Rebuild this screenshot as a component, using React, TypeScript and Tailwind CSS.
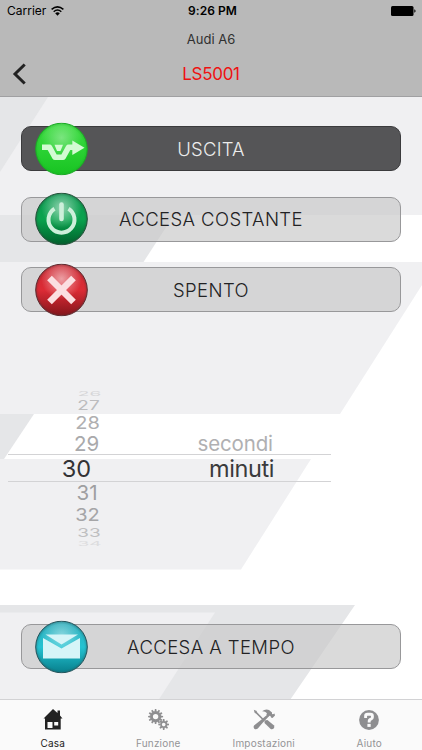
import type { ReactNode } from "react";

function Backdrop() {
  return (
    <svg className="absolute inset-0" width="422" height="750" viewBox="0 0 422 750" aria-hidden="true">
      <rect width="422" height="750" fill="#ffffff" />
      <rect y="97" width="422" height="118" fill="#f0f0f2" />
      <path d="M0 97H48L0 172Z" fill="#e5e6e8" />
      <path d="M0 215H174L143.500 262H0Z" fill="#e5e6e8" />
      <path d="M0 262H422V285L340 414H0Z" fill="#f0f0f2" />
      <path d="M0 414H34L4 459H0Z" fill="#e5e6e8" />
      <path d="M0 459H311L241 569.500H0Z" fill="#f0f0f2" />
      <path d="M0 605H355L290 700H0Z" fill="#e5e6e8" />
      <path d="M0 612.500H215L158.500 700H0Z" fill="#f0f0f2" />
    </svg>
  );
}

type OrbProps = {
  id: string;
  top: string;
  mid: string;
  low: string;
  rim: string;
  shine: number;
  children: ReactNode;
};

function Orb({ id, top, mid, low, rim, shine, children }: OrbProps) {
  return (
    <svg className="absolute top-1/2 left-[13px] -translate-y-1/2" width="53" height="53" viewBox="0 0 53 53" aria-hidden="true">
      <defs>
        <linearGradient id={id} x1="0" y1="0" x2="0" y2="1">
          <stop offset="0" stopColor={top} />
          <stop offset="0.500" stopColor={mid} />
          <stop offset="1" stopColor={low} />
        </linearGradient>
        <radialGradient id={id + "-shine"} cx="0.500" cy="0.280" r="0.400">
          <stop offset="0" stopColor="#fff" stopOpacity={shine} />
          <stop offset="1" stopColor="#fff" stopOpacity="0" />
        </radialGradient>
        <radialGradient id={id + "-edge"}>
          <stop offset="0.880" stopColor={rim} stopOpacity="0" />
          <stop offset="1" stopColor={rim} stopOpacity="0.350" />
        </radialGradient>
      </defs>
      <circle cx="26.500" cy="26.500" r="25.800" fill={`url(#${id})`} stroke={rim} strokeWidth="1" />
      <circle cx="26.500" cy="26.500" r="25.300" fill={`url(#${id}-shine)`} />
      <circle cx="26.500" cy="26.500" r="25.800" fill={`url(#${id}-edge)`} />
      {children}
    </svg>
  );
}

function ActionButton({ label, labelClass, active, orb }: { label: string; labelClass: string; active?: boolean; orb: ReactNode }) {
  return (
    <button
      className={
        "relative flex h-[45px] w-full items-center justify-center rounded-[10px] border pt-[2px] text-[18.5px] font-light " +
        (active ? "border-[#3b3b3d] bg-[#555557] text-[#ececec]" : "border-[#98989a] bg-[#c8c8c8]/67 text-[#222224]")
      }
    >
      {orb}
      <span className={"whitespace-nowrap " + labelClass}>{label}</span>
    </button>
  );
}

const minutes = [
  { n: 26, row: "h-2", text: "text-[19px] scale-y-[0.36] text-[#d6d6d8] translate-x-[0.500px] -translate-y-px" },
  { n: 27, row: "h-3.5", text: "text-[19px] scale-y-[0.68] text-[#bcbcbe] -translate-x-[0.500px]" },
  { n: 28, row: "h-5", text: "text-[20px] scale-y-[0.86] text-[#afafb1] -translate-x-[1.500px] translate-y-[0.500px]" },
  { n: 29, row: "h-6", text: "text-[20.5px] text-[#a9a9ab] -translate-x-[2.500px]" },
  { n: 30, row: "h-[25px]", text: "text-[23.5px] text-[#333335] -translate-x-[12.500px]" },
  { n: 31, row: "h-6", text: "text-[20.5px] text-[#9f9fa1] -translate-x-[2px]" },
  { n: 32, row: "h-[19px]", text: "text-[20px] scale-y-[0.86] text-[#a5a5a7] -translate-x-[1.500px]" },
  { n: 33, row: "h-4", text: "text-[19px] scale-y-[0.65] text-[#bfbfc1]" },
  { n: 34, row: "h-[7px]", text: "text-[19px] scale-y-[0.34] text-[#dcdcde] translate-x-[0.500px]" },
];

function DurationPicker() {
  return (
    <div className="relative mt-[78px] ml-2 flex h-[157px] w-[323px]">
      <div className="flex w-[162px] flex-col items-center">
        {minutes.map((m) => (
          <div key={m.n} className={"flex shrink-0 items-center justify-center " + m.row}>
            <span className={"block leading-none " + m.text}>{m.n}</span>
          </div>
        ))}
      </div>
      <div className="flex flex-1 flex-col pt-[42px]">
        <div className="flex h-6 items-center pl-[27.5px] text-[20.5px] leading-none tracking-[-0.15px] text-[#b0b0b2]">secondi</div>
        <div className="flex h-[25px] items-center pl-[39px] text-[23.5px] leading-none tracking-[-0.4px] text-[#3a3a3c]">minuti</div>
      </div>
      <div className="pointer-events-none absolute inset-x-0 top-16 h-7 border-y border-[#d3d3d5]" />
    </div>
  );
}

function HouseIcon() {
  return (
    <svg width="20" height="21" viewBox="0 0 20 21" aria-hidden="true">
      <path fill="#222" fillRule="evenodd" d="M10 0L14.500 4V1.500H17V6.500L19.500 9.500H17.700V20.500H2V9.500H0.500ZM4.500 13V19H9.500V13ZM11.200 13V16.500H15.200V13Z" />
    </svg>
  );
}

function Gear({ cx, cy, r, hole, teeth }: { cx: number; cy: number; r: number; hole: number; teeth: number }) {
  return (
    <g transform={`translate(${cx} ${cy})`}>
      <circle r={(r + hole) / 2} fill="none" stroke="#8e8e90" strokeWidth={r - hole} />
      {Array.from({ length: teeth }, (_, i) => (
        <path key={i} d={`M-1.100 ${-r + 0.5}L-0.700 ${-r - 1.900}H0.700L1.100 ${-r + 0.5}Z`} fill="#8e8e90" transform={`rotate(${(360 / teeth) * i})`} />
      ))}
    </g>
  );
}

function GearsIcon() {
  return (
    <svg width="21" height="21" viewBox="0 0 21 21" aria-hidden="true">
      <Gear cx={7.6} cy={7.6} r={5.6} hole={2.7} teeth={12} />
      <Gear cx={15.7} cy={15.5} r={3.5} hole={1.8} teeth={8} />
    </svg>
  );
}

function ToolsIcon() {
  return (
    <svg width="22" height="21" viewBox="0 0 22 21" fill="#8e8e90" aria-hidden="true">
      <path d="M0.800 0.800L3.400 1.800L4.300 3.600L11.400 10.700L10.300 11.800L3.200 4.700L1.600 3.700Z" />
      <path d="M11.600 11.600L14.400 10.900L20.800 16.300Q22 18 20.700 19.500Q19.100 21 17.400 19.800L11.500 13.900Z" />
      <path d="M14.500 5.400L16.200 7.100L9.500 13.900L4.800 19.500Q3 21 1.300 19.700Q-0.100 18 1.300 16.300L7.300 11.400Z" />
      <path d="M9 2.300Q12.500-0.400 16 1L19 3.400L19 5L20 5.300L21.500 4.600L22 6.500L19.500 8.900L18 8.600L17.500 7.100L16.500 6.800L15.700 7.600L13.300 5.500L14 4.300Q12 2 9 2.300Z" />
    </svg>
  );
}

function HelpIcon() {
  return (
    <svg width="20" height="20" viewBox="0 0 20 20" aria-hidden="true">
      <circle cx="10" cy="10" r="9.900" fill="#8e8e90" />
      <path d="M6.600 7.900V6Q6.600 4.300 8.500 4.300H11.500Q13.400 4.300 13.400 6V7.300Q13.400 8.800 12 9.200Q10.200 9.700 10.200 11.200V12.400" fill="none" stroke="#fafafa" strokeWidth="2.900" />
      <rect x="8.400" y="13.900" width="3.300" height="3" fill="#fafafa" />
    </svg>
  );
}

const tabs = [
  { label: "Casa", icon: <HouseIcon />, tone: "text-[#222]" },
  { label: "Funzione", icon: <GearsIcon />, tone: "text-[#949496]" },
  { label: "Impostazioni", icon: <ToolsIcon />, tone: "text-[#949496]" },
  { label: "Aiuto", icon: <HelpIcon />, tone: "text-[#949496]" },
];

export default function App() {
  return (
    <div className="relative h-[750px] w-[422px] overflow-hidden font-['Inter','Liberation_Sans',sans-serif]">
      <Backdrop />
      <div className="relative flex h-full flex-col">
        <header className="flex h-[97px] shrink-0 flex-col border-b border-[#a0a0a2] bg-[#b9b9b9]">
          <div className="grid h-[22px] grid-cols-3 items-center pr-[6px] pl-[7px] text-[12px] text-black">
            <div className="flex items-center gap-[5px]">
              <span>Carrier</span>
              <svg width="13" height="10" viewBox="0 0 13 10" aria-hidden="true">
                <path d="M0.600 3.400Q6.500-1.700 12.400 3.400" fill="none" stroke="#000" strokeWidth="1.500" />
                <path d="M2.700 5.700Q6.500 2.400 10.300 5.700" fill="none" stroke="#000" strokeWidth="1.500" />
                <path d="M4.200 7.200Q6.500 5.300 8.800 7.200L6.500 9.700Z" />
              </svg>
            </div>
            <div className="pl-[2px] text-center font-semibold tracking-[0.05px] whitespace-nowrap">9:26 PM</div>
            <svg className="justify-self-end" width="25" height="10" viewBox="0 0 25 10" aria-hidden="true">
              <rect width="22.500" height="10" rx="1.500" />
              <path d="M23.300 3.300Q24.600 3.800 24.600 5T23.300 6.700Z" />
            </svg>
          </div>
          <div className="flex h-[34px] items-center justify-center pt-[2px] text-[13px] text-[#303030]">Audi A6</div>
          <div className="grid h-9 grid-cols-[60px_1fr_60px] items-center">
            <svg className="ml-3" width="15" height="22" viewBox="0 0 15 22" aria-hidden="true">
              <path d="M12.700 1.500L3 11L12.700 20.500" fill="none" stroke="#222" strokeWidth="3" />
            </svg>
            <h1 className="pt-[2px] text-center text-[17px] tracking-[-0.3px] text-[#ee1111]">LS5001</h1>
          </div>
        </header>

        <main className="flex flex-1 flex-col">
          <div className="flex flex-col gap-[25.5px] px-[21px] pt-[29px]">
            <ActionButton
              active
              label="USCITA"
              labelClass="tracking-[0.2px]"
              orb={
                <Orb id="orb-exit" top="#3fdc43" mid="#2bd334" low="#18c322" rim="#1ba825" shine={0.35}>
                  <path d="M7 24.800H14.500L20 34.800H28L33.500 24.800H40" fill="none" stroke="#d3fbd3" strokeWidth="5.600" strokeLinejoin="round" />
                  <path d="M19.500 22.200H28L25.500 28.500H22Z" fill="#d3fbd3" />
                  <path d="M37.300 18L49.500 25.200L37.300 32.500Z" fill="#d3fbd3" />
                </Orb>
              }
            />
            <ActionButton
              label="ACCESA COSTANTE"
              labelClass="tracking-[0.4px]"
              orb={
                <Orb id="orb-on" top="#0b9850" mid="#0aa34e" low="#00612c" rim="#25513a" shine={0.55}>
                  <path d="M19.500 16.200A13 13 0 1 0 33.500 16.200" fill="none" stroke="#cdefda" strokeWidth="4" />
                  <path d="M26.500 12V26.500" stroke="#cdefda" strokeWidth="4.600" strokeLinecap="round" />
                </Orb>
              }
            />
            <ActionButton
              label="SPENTO"
              labelClass="tracking-[0.4px]"
              orb={
                <Orb id="orb-off" top="#cc2a34" mid="#dc2b35" low="#84151b" rim="#5d2c30" shine={0.55}>
                  <path d="M14.500 14.500L38.500 38.500M38.500 14.500L14.500 38.500" stroke="#fbdfe1" strokeWidth="6.600" />
                </Orb>
              }
            />
          </div>

          <DurationPicker />

          <div className="mt-auto px-[21px] pb-[30px]">
            <ActionButton
              label="ACCESA A TEMPO"
              labelClass="tracking-[0.42px]"
              orb={
                <Orb id="orb-timer" top="#2aa9b7" mid="#25c3d2" low="#077f8c" rim="#25545b" shine={0.45}>
                  <path d="M10.500 14H43L26.500 24Z" fill="#d6f5f8" />
                  <path d="M8 17.500L26.500 28L45 17.500V38H8Z" fill="#d6f5f8" />
                </Orb>
              }
            />
          </div>
        </main>

        <nav className="grid h-[51px] shrink-0 grid-cols-4 border-t border-[#d2d2d4] bg-[#fafafa]">
          {tabs.map((t) => (
            <a key={t.label} className={"flex flex-col items-center pt-2 " + t.tone}>
              <span className="flex h-[23px] items-center">{t.icon}</span>
              <span className="mt-[6px] text-[10px] leading-[13px] tracking-[0.2px]">{t.label}</span>
            </a>
          ))}
        </nav>
      </div>
    </div>
  );
}
